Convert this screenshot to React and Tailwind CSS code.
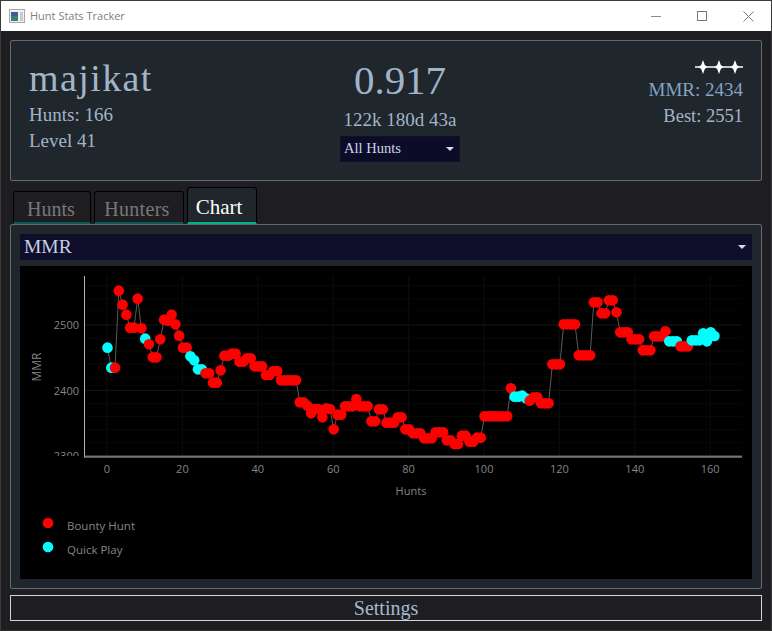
import React from 'react';

const Z1 = [[0,263,1],[1,323,1],[2,323,0],[3,92,0],[4,134,0],[5,164,0],[6,203,0],[7,203,0],[8,116,0],[9,205,0],[10,236,1],[11,253,0],[12,292,0],[13,292,0],[14,238,0],[15,179,0],[16,182,0],[17,164,0],[18,193,0],[19,227,0],[20,263,0],[21,263,0],[22,289,1],[23,301,1],[24,328,1],[25,328,1],[26,340,0],[27,340,0],[28,368,0],[29,368,0],[30,331,0],[31,287,0],[32,287,0],[33,281,0],[34,281,0],[35,305,0],[36,305,0],[37,295,0],[38,295,0],[39,319,0],[40,319,0],[41,319,0],
[42,345,0],[43,345,0],[44,333,0],[45,333,0],[46,361,0],[47,361,0],[48,361,0],[49,361,0],[50,361,0],[51,427,0],[52,427,0],[53,437,0],[54,460,0],[55,447,0],[56,447,0],[57,472,0],[58,445,0],[59,447,0],[60,508,0],[61,464,0],[62,464,0],[63,439,0],[64,439,0],[65,439,0],[66,417,0],[67,439,0],[68,439,0],[69,439,0],[70,484,0],[71,484,0],[72,448,0],[73,448,0],[74,488,0],[75,488,0],[76,488,0],[77,472,0],[78,472,0],[79,508,0],[80,508,0],[81,520,0],[82,520,0],[83,520,0],[84,535,0],[85,535,0],[86,535,0],[87,517,0],[88,517,0],[89,517,0],[90,541,0],[91,541,0],[92,552,0],[93,552,0],[94,527,0],[95,527,0],[96,545,0],[97,545,0],[98,533,0],[99,533,0],[100,469,0],[101,469,0],[102,469,0],[103,469,0],[104,469,0],[105,469,0],[106,469,0],[107,385,0],
[108,410,1],[109,410,1],[110,407,1],[111,415,1],[112,422,0],[113,412,0],[114,412,0],[115,430,0],[116,430,0],[117,430,0],[118,313,0],[119,313,0],[120,313,0],[121,193,0],[122,193,0],[123,193,0],[124,193,0],[125,286,0],[126,286,0],[127,286,0],[128,286,0],[129,127,0],[130,127,0],[131,160,0],[132,160,0],[133,121,0],[134,121,0],[135,157,0],[136,217,0],[137,217,0],[138,217,0],[139,238,0],[140,238,0],[141,238,0],[142,271,0],[143,271,0],[144,271,0],[145,229,0],[146,229,0],[147,229,0],[148,214,0],[149,244,1],[150,244,1],[151,244,1],[152,259,0],[153,259,0],[154,259,0],[155,241,1],[156,241,1],[157,241,1],[158,220,1],[159,244,1],[160,217,1],[161,228,1]];

// chart svg is placed at page (20,266)
const pts = Z1.map(([i, zy, c]) => ({ x: 107.5 + i * 3.77 - 20, y: 260 + zy / 3 - 266, c }));
const fmt = (n) => n.toFixed(1);
const poly = pts.map((p) => `${fmt(p.x)},${fmt(p.y)}`).join(' ');

const xTicks = [0, 20, 40, 60, 80, 100, 120, 140, 160];
const axisFont = { fontFamily: '"Open Sans", sans-serif' };

function Chart() {
  const minor = [];
  for (let v = 2320; v <= 2560; v += 20) minor.push(v);
  const yOf = (v) => 189.7 - (v - 2300) * 0.6533;
  return (
    <svg width="732" height="313" viewBox="0 0 732 313" className="block">
      {minor.map((v) => (
        <line key={v} x1="65" x2="722" y1={yOf(v)} y2={yOf(v)} stroke={v % 100 === 0 ? '#161616' : '#080808'} strokeWidth="1" />
      ))}
      {xTicks.map((t) => (
        <line key={t} x1={87 + t * 3.77} x2={87 + t * 3.77} y1="10" y2="190" stroke="#0c0c0c" strokeWidth="1" />
      ))}
      <g fill="#858585" fontSize="11" style={axisFont}>
        <text x="59" y="63" textAnchor="end">2500</text>
        <text x="59" y="129" textAnchor="end">2400</text>
        <text x="59" y="194" textAnchor="end">2300</text>
      </g>
      <rect x="30" y="190" width="40" height="8" fill="#000000" />
      <line x1="64.5" x2="64.5" y1="10" y2="191" stroke="#b9b4b4" strokeWidth="1" />
      <line x1="64" x2="722" y1="190" y2="190" stroke="#6d5f5f" strokeWidth="1" />
      <line x1="64" x2="722" y1="191" y2="191" stroke="#b9b4b4" strokeWidth="1" />
      <polyline points={poly} fill="none" stroke="#5a5a5a" strokeWidth="1" />
      {pts.map((p, i) => (
        <circle key={i} cx={p.x} cy={p.y} r="5.3" fill={p.c ? '#00ffff' : '#ff0000'} />
      ))}
      <g fill="#858585" fontSize="11" style={axisFont}>
        {xTicks.map((t) => (
          <text key={t} x={87 + t * 3.77} y="207" textAnchor="middle">{t}</text>
        ))}
        <text x="391" y="229" textAnchor="middle">Hunts</text>
        <text x="21" y="101" textAnchor="middle" fontSize="12" transform="rotate(-90 21 101)">MMR</text>
        <text x="47" y="264" fontSize="11.5">Bounty Hunt</text>
        <text x="47" y="288" fontSize="11.5">Quick Play</text>
      </g>
      <circle cx="28" cy="257" r="5.3" fill="#ff0000" />
      <circle cx="28" cy="281" r="5.3" fill="#00ffff" />
    </svg>
  );
}

function Stars() {
  const star = (cx) => `M${cx} 60 L${cx + 1.8} 65 L${cx + 4.5} 67 L${cx + 1.8} 69 L${cx} 74 L${cx - 1.8} 69 L${cx - 4.5} 67 L${cx - 1.8} 65 Z`;
  return (
    <svg width="48" height="18" viewBox="695 58 48 18" className="block">
      <line x1="695" x2="743" y1="67" y2="67" stroke="#ffffff" strokeWidth="1.5" />
      <path d={star(703)} fill="#ffffff" />
      <path d={star(719)} fill="#ffffff" />
      <path d={star(735)} fill="#ffffff" />
    </svg>
  );
}

function Caret() {
  return <span className="block w-0 h-0 border-l-[4px] border-r-[4px] border-t-[4px] border-l-transparent border-r-transparent border-t-[#d8dce8]" />;
}

export default function App() {
  const serif = { fontFamily: '"Liberation Serif", serif' };
  return (
    <div className="w-[772px] h-[631px] flex flex-col border border-[#3a3a3a] border-b-[#2e2e2e] bg-[#1e1e22] overflow-hidden" style={serif}>
      <div className="h-[30px] shrink-0 bg-white flex items-center pl-[8px]">
        <svg width="16" height="14" viewBox="0 0 16 14" className="mr-[5px]">
          <rect x="0.5" y="0.5" width="15" height="13" fill="#f0f0f0" stroke="#a8a8a8" />
          <rect x="2" y="3" width="7" height="9" fill="#3d7f78" />
          <rect x="2" y="3" width="7" height="4" fill="#3f5f8f" />
          <rect x="11" y="3" width="3" height="9" fill="#c8ccd0" />
        </svg>
        <span className="text-[11px] text-[#808080]" style={{ fontFamily: '"Open Sans", sans-serif' }}>Hunt Stats Tracker</span>
        <div className="ml-auto flex items-center text-[#6a6a6a]">
          <div className="w-[46px] flex justify-center"><div className="w-[10px] h-px bg-[#8a8a8a]" /></div>
          <div className="w-[46px] flex justify-center"><div className="w-[10px] h-[10px] border border-[#777]" /></div>
          <div className="w-[46px] flex justify-center">
            <svg width="11" height="11" viewBox="0 0 11 11"><path d="M0.5 0.5 L10.5 10.5 M10.5 0.5 L0.5 10.5" stroke="#777" strokeWidth="1" fill="none" /></svg>
          </div>
        </div>
      </div>

      <div className="flex-1 flex flex-col px-[9px] pt-[9px]">
        <div className="h-[141px] shrink-0 rounded-[2px] border border-[#666a6c] bg-[#1f272d] grid grid-cols-[251px_240px_223px] px-[18px] pt-[12px] text-[#a3b4c9]">
          <div>
            <div className="text-[38px] leading-[50px] tracking-[1.4px]">majikat</div>
            <div className="text-[19px] leading-[26px] mt-[-1px]">Hunts: 166</div>
            <div className="text-[19px] leading-[26px]">Level 41</div>
          </div>
          <div className="flex flex-col items-center">
            <div className="text-[41px] leading-[52px] tracking-[-0.1px] mt-[1px]">0.917</div>
            <div className="text-[19px] leading-[24px] mt-[2px]">122k 180d 43a</div>
            <div className="mt-[4px] w-[120px] h-[26px] bg-[#0d0c28] border border-[#111125] flex items-center pl-[3px] pr-[5px] text-[14.5px] text-[#cdd6e8]">
              <span>All Hunts</span>
              <span className="ml-auto flex items-center"><Caret /></span>
            </div>
          </div>
          <div className="flex flex-col items-end">
            <div className="mt-[5px]"><Stars /></div>
            <div className="text-[19px] leading-[26px] text-[#86a2c4] mt-[1px]">MMR: 2434</div>
            <div className="text-[18.5px] leading-[26px]">Best: 2551</div>
          </div>
        </div>

        <div className="h-[43px] shrink-0 flex items-end pl-[3px] gap-[3px]">
          <div className="w-[78px] h-[33px] rounded-t-[3px] border border-black bg-[#1e1e22] flex items-center justify-center text-[20px] text-[#787878] pt-[3px] pr-[2px]" style={{ borderBottom: '2px solid #0f5a55' }}>Hunts</div>
          <div className="w-[90px] h-[33px] rounded-t-[3px] border border-black bg-[#1e1e22] flex items-center justify-center text-[20px] tracking-[0.3px] text-[#787878] pt-[3px] pr-[4px]" style={{ borderBottom: '2px solid #0f5a55' }}>Hunters</div>
          <div className="w-[70px] h-[37px] rounded-t-[3px] border border-black bg-[#1f272d] flex items-center justify-center text-[21px] text-white pt-[6px] pr-[6px]" style={{ borderBottom: '2px solid #00b184' }}>Chart</div>
        </div>

        <div className="h-[365px] shrink-0 rounded-[2px] border border-[#666a6c] bg-[#1f272d] p-[9px] flex flex-col">
          <div className="h-[26px] shrink-0 bg-[#0f0e2a] flex items-center pl-[4px] pr-[6px] text-[19.5px] text-[#c6d0e4]">
            <span>MMR</span>
            <span className="ml-auto flex items-center"><Caret /></span>
          </div>
          <div className="mt-[6px] w-[732px] h-[313px] bg-black"><Chart /></div>
        </div>

        <div className="mt-[6px] h-[26px] shrink-0 border border-[#d4d4d4] bg-[#1e1e22] flex items-center justify-center text-[20px] text-[#a8b8cc]">Settings</div>
      </div>
    </div>
  );
}
